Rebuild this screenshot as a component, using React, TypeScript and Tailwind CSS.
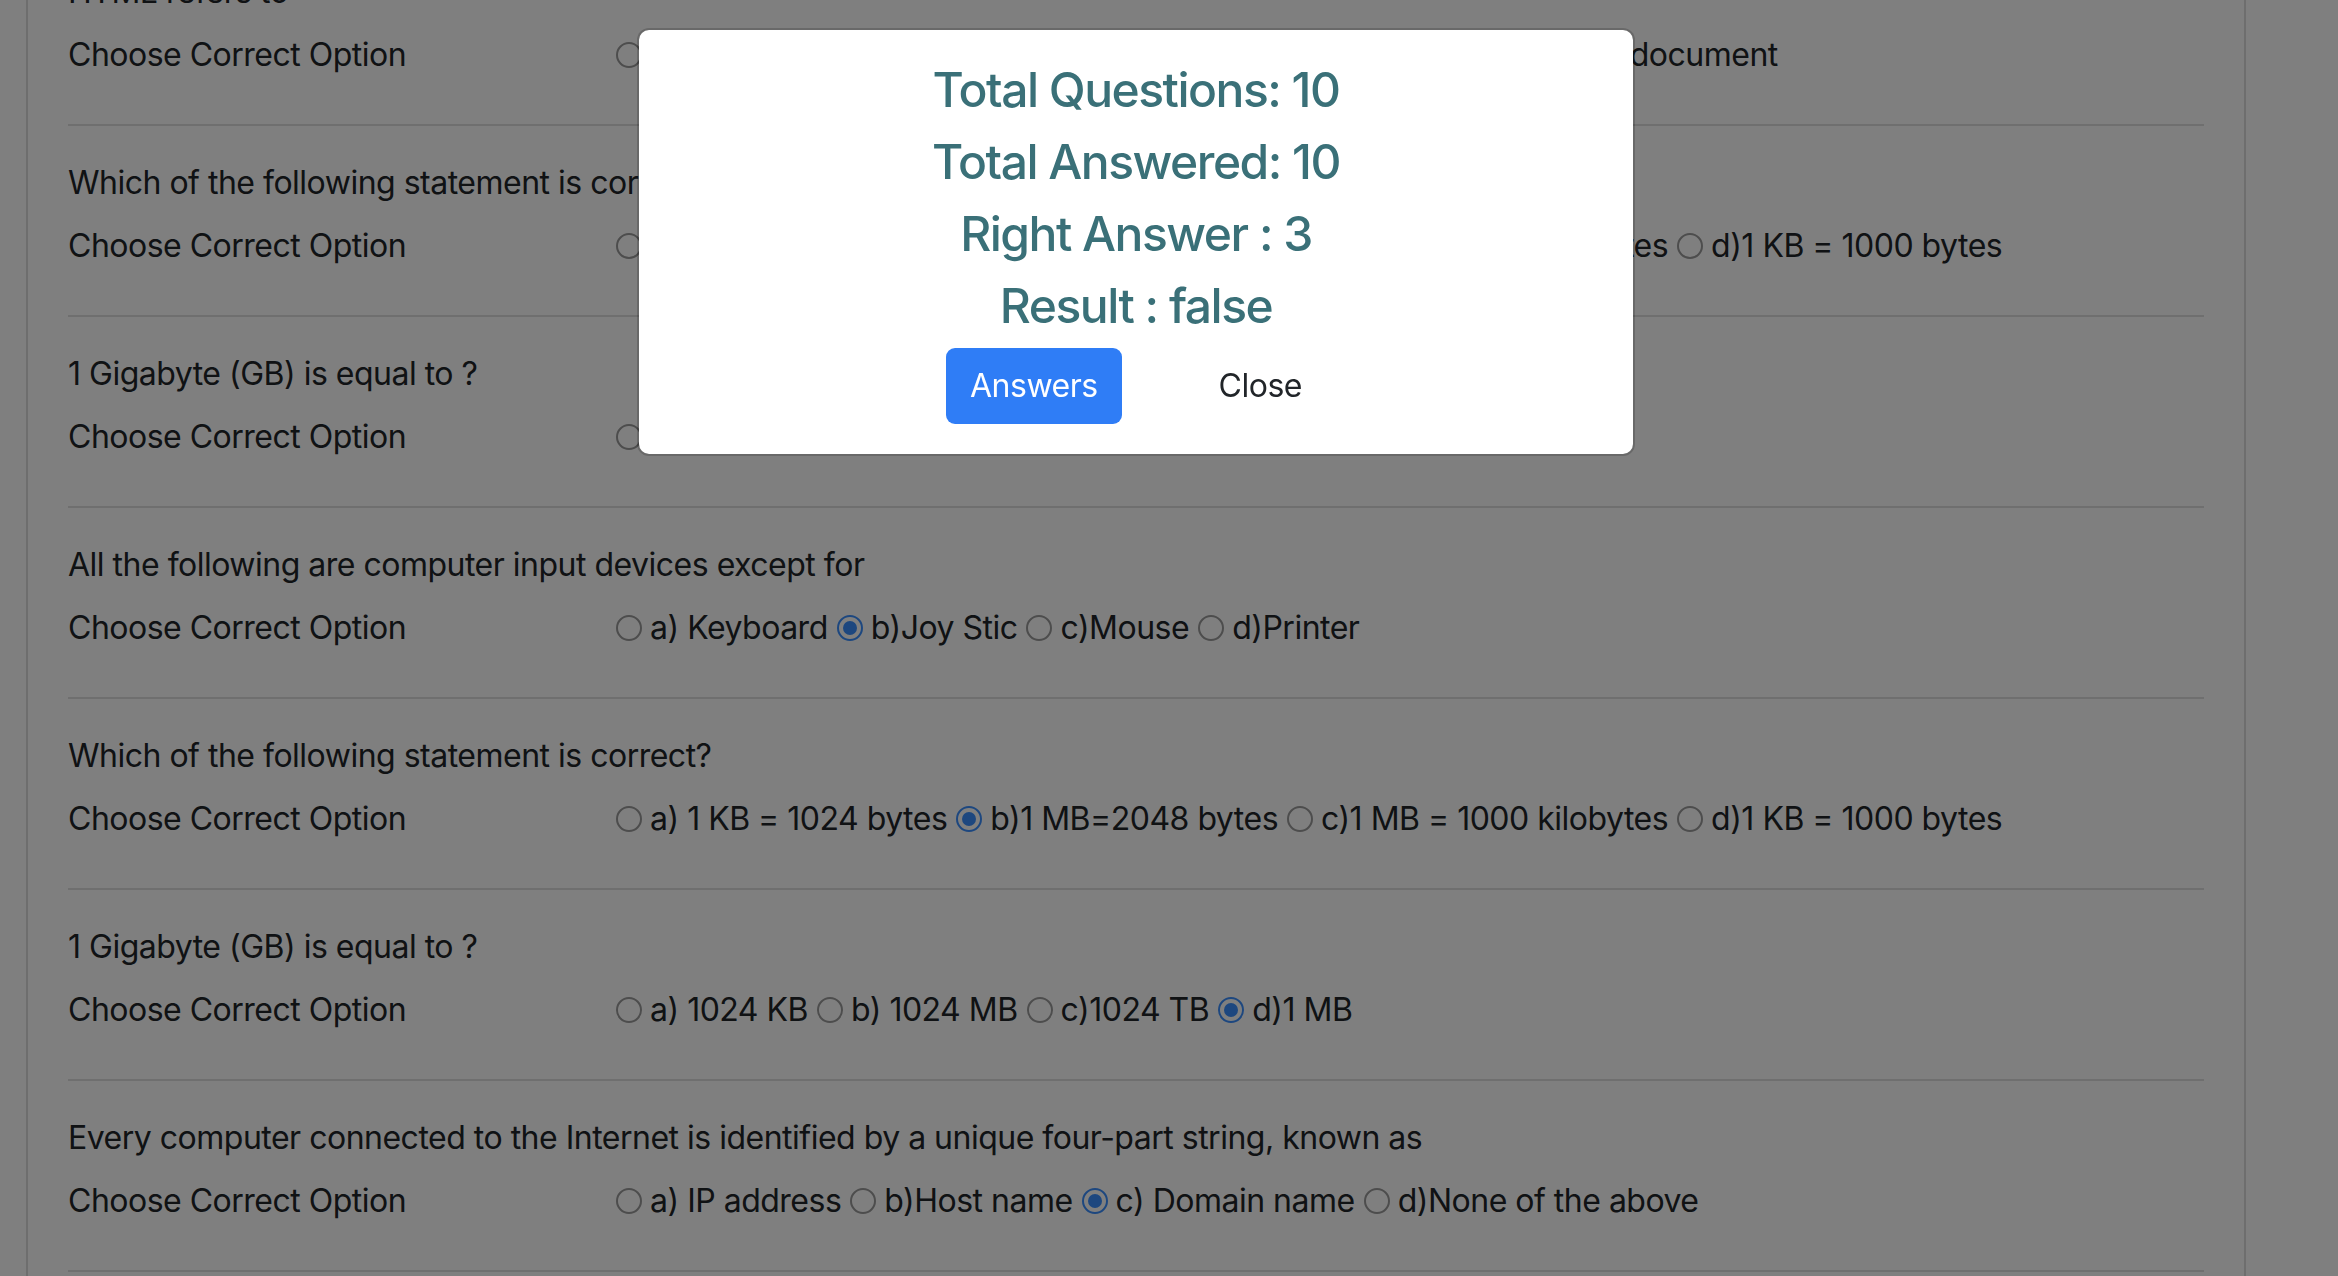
import React from "react";

type Opt = { label: string; checked?: boolean };
type Q = { q: string; opts: Opt[] };

function Radio({ checked }: { checked?: boolean }) {
  if (checked) {
    return (
      <span className="inline-flex w-[26px] h-[26px] shrink-0 items-center justify-center rounded-full border-2 border-[#3b8ffe] bg-white">
        <span className="w-[14px] h-[14px] rounded-full bg-[#3b8ffe]" />
      </span>
    );
  }
  return <span className="inline-block w-[26px] h-[26px] shrink-0 rounded-full border-2 border-[#9a9a9a] bg-white" />;
}

const questions: Q[] = [
  {
    q: "HTML refers to",
    opts: [
      { label: "a) HyperText Markup Language" },
      { label: "b) Webpage", checked: true },
      { label: "c)Icon" },
      { label: "d)Word document" },
    ],
  },
  {
    q: "Which of the following statement is correct?",
    opts: [
      { label: "a) 1 KB = 1024 bytes" },
      { label: "b)1 MB=2048 bytes", checked: true },
      { label: "c)1 MB = 1000 kilobytes" },
      { label: "d)1 KB = 1000 bytes" },
    ],
  },
  {
    q: "1 Gigabyte (GB) is equal to ?",
    opts: [
      { label: "a) 1024 KB" },
      { label: "b) 1024 MB" },
      { label: "c)1024 TB" },
      { label: "d)1 MB", checked: true },
    ],
  },
  {
    q: "All the following are computer input devices except for",
    opts: [
      { label: "a) Keyboard" },
      { label: "b)Joy Stic", checked: true },
      { label: "c)Mouse" },
      { label: "d)Printer" },
    ],
  },
  {
    q: "Which of the following statement is correct?",
    opts: [
      { label: "a) 1 KB = 1024 bytes" },
      { label: "b)1 MB=2048 bytes", checked: true },
      { label: "c)1 MB = 1000 kilobytes" },
      { label: "d)1 KB = 1000 bytes" },
    ],
  },
  {
    q: "1 Gigabyte (GB) is equal to ?",
    opts: [
      { label: "a) 1024 KB" },
      { label: "b) 1024 MB" },
      { label: "c)1024 TB" },
      { label: "d)1 MB", checked: true },
    ],
  },
  {
    q: "Every computer connected to the Internet is identified by a unique four-part string, known as",
    opts: [
      { label: "a) IP address" },
      { label: "b)Host name" },
      { label: "c) Domain name", checked: true },
      { label: "d)None of the above" },
    ],
  },
];

function Block({ item }: { item: Q }) {
  return (
    <div className="pt-[33px]">
      <div className="h-[48px] leading-[48px] whitespace-nowrap">{item.q}</div>
      <div className="mt-[15px] h-[48px] flex items-center">
        <div className="w-[548px] shrink-0 leading-[48px] whitespace-nowrap">Choose Correct Option</div>
        <div className="flex items-center whitespace-nowrap">
          {item.opts.map((o, i) => (
            <span key={i} className="flex items-center mr-[9px]">
              <Radio checked={o.checked} />
              <span className="ml-[8px] leading-[48px]">{o.label}</span>
            </span>
          ))}
        </div>
      </div>
      <div className="mt-[45px] h-[2px] bg-[#dedede]" />
    </div>
  );
}

export default function App() {
  const lines = ["Total Questions: 10", "Total Answered: 10", "Right Answer : 3", "Result : false"];
  return (
    <div className="relative h-[1276px] w-[2338px] overflow-hidden bg-white font-[Inter,'Noto_Sans',sans-serif] text-[32px] text-[#212529] tracking-[-0.5px]">
      <div className="ml-[26px] mr-[92px] h-[1400px] flex flex-col border-x-2 border-[#dcdcdc] px-[40px]">
        <div className="mt-[-65px]">
          {questions.map((q, i) => (
            <Block key={i} item={q} />
          ))}
        </div>
      </div>

      <div className="fixed inset-0 bg-black/50">
        <div className="absolute left-[637px] top-[28px] w-[998px] rounded-[12px] border-2 border-[rgba(0,0,0,0.175)] bg-white bg-clip-padding flex flex-col items-center pt-[24px] pb-[30px]">
          {lines.map((l) => (
            <div key={l} className="h-[72px] leading-[72px] text-[48px] font-medium text-[#3a7078] tracking-[-1.5px]">
              {l}
            </div>
          ))}
          <div className="mt-[6px] flex items-center gap-[73px]">
            <button className="h-[76px] px-[24px] rounded-[9px] bg-[#2f7df6] text-white text-[32px] leading-[48px]">
              Answers
            </button>
            <button className="px-[24px] text-[32px] leading-[48px] text-[#212529]">Close</button>
          </div>
        </div>
      </div>
    </div>
  );
}
